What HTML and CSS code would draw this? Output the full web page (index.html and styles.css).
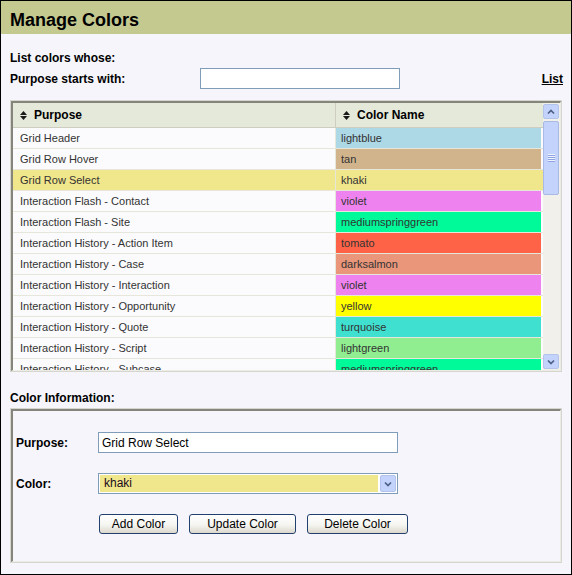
FILE: index.html
```html
<!DOCTYPE html>
<html>
<head>
<title>Manage Colors</title>
<link rel="stylesheet" href="styles.css">
</head>
<body>

<div class="frame">
  <div class="titlebar">
    <h1>Manage Colors</h1>
  </div>

  <div class="content">
    <div class="filter-title">List colors whose:</div>
    <div class="filter-row">
      <label class="filter-label" for="purpose-filter">Purpose starts with:</label>
      <input type="text" id="purpose-filter" class="text-input filter-input">
      <a href="#" class="list-link">List</a>
    </div>

    <div class="grid">
      <div class="grid-inner">
        <div class="grid-main">
          <div class="grid-head">
            <div class="hcell purpose-head">
              <svg class="sort-icon" width="7" height="9" viewBox="0 0 7 9"><path d="M0 4 L3.5 0 L7 4 Z M0 5 L7 5 L3.5 9 Z" fill="#1a1a1a"/></svg>
              Purpose
            </div>
            <div class="hcell">
              <svg class="sort-icon" width="7" height="9" viewBox="0 0 7 9"><path d="M0 4 L3.5 0 L7 4 Z M0 5 L7 5 L3.5 9 Z" fill="#1a1a1a"/></svg>
              Color Name
            </div>
          </div>
          <div class="grid-body">
            <div class="grid-row"><div class="cell purpose-cell">Grid Header</div><div class="cell name-cell" style="background: lightblue">lightblue</div></div>
            <div class="grid-row"><div class="cell purpose-cell">Grid Row Hover</div><div class="cell name-cell" style="background: tan">tan</div></div>
            <div class="grid-row selected"><div class="cell purpose-cell">Grid Row Select</div><div class="cell name-cell" style="background: khaki">khaki</div></div>
            <div class="grid-row"><div class="cell purpose-cell">Interaction Flash - Contact</div><div class="cell name-cell" style="background: violet">violet</div></div>
            <div class="grid-row"><div class="cell purpose-cell">Interaction Flash - Site</div><div class="cell name-cell" style="background: mediumspringgreen">mediumspringgreen</div></div>
            <div class="grid-row"><div class="cell purpose-cell">Interaction History - Action Item</div><div class="cell name-cell" style="background: tomato">tomato</div></div>
            <div class="grid-row"><div class="cell purpose-cell">Interaction History - Case</div><div class="cell name-cell" style="background: darksalmon">darksalmon</div></div>
            <div class="grid-row"><div class="cell purpose-cell">Interaction History - Interaction</div><div class="cell name-cell" style="background: violet">violet</div></div>
            <div class="grid-row"><div class="cell purpose-cell">Interaction History - Opportunity</div><div class="cell name-cell" style="background: yellow">yellow</div></div>
            <div class="grid-row"><div class="cell purpose-cell">Interaction History - Quote</div><div class="cell name-cell" style="background: turquoise">turquoise</div></div>
            <div class="grid-row"><div class="cell purpose-cell">Interaction History - Script</div><div class="cell name-cell" style="background: lightgreen">lightgreen</div></div>
            <div class="grid-row"><div class="cell purpose-cell">Interaction History - Subcase</div><div class="cell name-cell" style="background: mediumspringgreen">mediumspringgreen</div></div>
          </div>
        </div>

        <div class="scrollbar">
          <div class="sb-btn">
            <svg width="8" height="6" viewBox="0 0 8 6"><path d="M1 4.5 L4 1.5 L7 4.5" fill="none" stroke="#4d6185" stroke-width="1.7"/></svg>
          </div>
          <div class="sb-thumb">
            <svg width="7" height="8" viewBox="0 0 7 8">
              <path d="M0 0.5 H7 M0 2.5 H7 M0 4.5 H7 M0 6.5 H7" stroke="#eef3ff" stroke-width="1"/>
              <path d="M0 1.5 H7 M0 3.5 H7 M0 5.5 H7 M0 7.5 H7" stroke="#8ea4e0" stroke-width="1"/>
            </svg>
          </div>
          <div class="sb-btn sb-down">
            <svg width="8" height="6" viewBox="0 0 8 6"><path d="M1 1.5 L4 4.5 L7 1.5" fill="none" stroke="#4d6185" stroke-width="1.7"/></svg>
          </div>
        </div>
      </div>
    </div>

    <div class="section-label">Color Information:</div>
    <div class="info-box">
      <div class="info-inner">
        <div class="form-row">
          <label class="form-label" for="purpose">Purpose:</label>
          <input type="text" id="purpose" class="text-input" value="Grid Row Select">
        </div>
        <div class="form-row">
          <label class="form-label">Color:</label>
          <div class="select-box">
            <div class="select-value">khaki</div>
            <div class="select-arrow">
              <svg width="8" height="6" viewBox="0 0 8 6"><path d="M1 1.5 L4 4.5 L7 1.5" fill="none" stroke="#4d6185" stroke-width="1.7"/></svg>
            </div>
          </div>
        </div>
        <div class="button-row">
          <button class="btn btn-add">Add Color</button>
          <button class="btn btn-update">Update Color</button>
          <button class="btn btn-delete">Delete Color</button>
        </div>
      </div>
    </div>
  </div>
</div>

</body>
</html>
```

FILE: styles.css
```css
body {
  margin: 0;
  font-family: "Liberation Sans", Arial, sans-serif;
  color: #000;
}

.frame {
  width: 572px;
  height: 575px;
  box-sizing: border-box;
  border: 1px solid #000;
  background-color: #f5f5fb;
  overflow: hidden;
}

.titlebar {
  height: 33px;
  box-sizing: border-box;
  padding: 6px 9px 0;
  background-color: #c4c98f;
}

.titlebar h1 {
  margin: 0;
  font-size: 18px;
  line-height: 27px;
  font-weight: bold;
}

.content {
  padding: 16px 9px 0 9px;
}

.filter-title, .section-label {
  font-size: 12px;
  font-weight: bold;
  line-height: 16px;
}

.filter-row {
  display: flex;
  align-items: center;
  height: 21px;
  margin-top: 2px;
}

.filter-label {
  width: 190px;
  font-size: 12px;
  font-weight: bold;
}

.text-input {
  width: 300px;
  height: 21px;
  box-sizing: border-box;
  border: 1px solid #7f9db9;
  background: #fff;
  padding: 0 3px;
  margin: 0;
  font: 12px "Liberation Sans", Arial, sans-serif;
  color: #000;
  outline: none;
}

.filter-input {
  width: 200px;
}

.list-link {
  margin-left: auto;
  margin-right: -1px;
  font-size: 12px;
  font-weight: bold;
  color: #000;
  text-decoration: underline;
}

/* sunken 3d box used for the grid and the form */
.grid, .info-box {
  box-sizing: border-box;
  border: 1px solid #d6d6ce;
}

.grid-inner, .info-inner {
  height: 100%;
  box-sizing: border-box;
  border-style: solid;
  border-width: 2px 1px 1px 2px;
  border-color: #85857b #ecece6 #ecece6 #85857b;
}

.grid {
  margin-top: 11px;
  height: 272px;
}

.grid-inner {
  display: flex;
  background-color: #fbfbfd;
}

.grid-main {
  flex: 1;
  display: flex;
  flex-direction: column;
  overflow: hidden;
}

.grid-head {
  display: grid;
  grid-template-columns: 323px 1fr;
  height: 25px;
  flex-shrink: 0;
  box-sizing: border-box;
  border-bottom: 1px solid #cdcdc2;
  background-color: #e4e9da;
}

.hcell {
  display: flex;
  align-items: center;
  gap: 7px;
  padding-left: 7px;
  font-size: 12px;
  font-weight: bold;
}

.purpose-head {
  border-right: 1px solid #cdcdc2;
}

.grid-body {
  flex: 1;
  overflow: hidden;
}

.grid-row {
  display: grid;
  grid-template-columns: 323px 205px;
  height: 21px;
  box-sizing: border-box;
  border-bottom: 1px solid #e6e6da;
  font-size: 11px;
  color: #333;
}

.grid-row.selected {
  background-color: khaki;
}

.cell {
  line-height: 20px;
  white-space: nowrap;
  overflow: hidden;
}

.purpose-cell {
  padding-left: 7px;
  border-right: 1px solid #e6e6da;
}

.name-cell {
  padding-left: 5px;
}

/* xp style scrollbar */
.scrollbar {
  width: 17px;
  flex-shrink: 0;
  display: flex;
  flex-direction: column;
  box-sizing: border-box;
  padding: 1px 0 1px;
  background-color: #f1f0ea;
}

.sb-btn, .sb-thumb, .select-arrow {
  display: flex;
  align-items: center;
  justify-content: center;
  box-sizing: border-box;
  border: 1px solid #b2c3ec;
  border-radius: 2px;
  background-color: #c3d3fc;
}

.sb-btn {
  height: 15px;
  margin: 0 1px 0 0;
}

.sb-thumb {
  height: 74px;
  margin: 2px 1px 0 0;
  border-color: #a9b9e6;
}

.sb-down {
  margin-top: auto;
}

.section-label {
  margin-top: 18px;
}

.info-box {
  margin-top: 2px;
  height: 155px;
}

.info-inner {
  padding: 21px 0 0 3px;
}

.form-row {
  display: flex;
  align-items: center;
  height: 21px;
}

.form-row + .form-row {
  margin-top: 20px;
}

.form-label {
  width: 82px;
  font-size: 12px;
  font-weight: bold;
}

.select-box {
  display: flex;
  width: 300px;
  height: 21px;
  box-sizing: border-box;
  border: 1px solid #7f9db9;
  padding: 1px;
  background: #fff;
}

.select-value {
  flex: 1;
  background-color: khaki;
  padding-left: 4px;
  font-size: 12px;
  line-height: 17px;
  color: #1a0a1a;
}

.select-arrow {
  width: 16px;
  margin-left: 2px;
}

.button-row {
  display: flex;
  gap: 11px;
  margin: 20px 0 0 83px;
}

.btn {
  height: 20px;
  box-sizing: border-box;
  padding: 0;
  border: 1px solid #22406e;
  border-radius: 3px;
  background: linear-gradient(#ffffff, #f5f5f1 55%, #dcd8cd);
  font: 12px "Liberation Sans", Arial, sans-serif;
  color: #000;
  cursor: pointer;
}

.btn-add {
  width: 79px;
}

.btn-update {
  width: 107px;
}

.btn-delete {
  width: 101px;
}
```
